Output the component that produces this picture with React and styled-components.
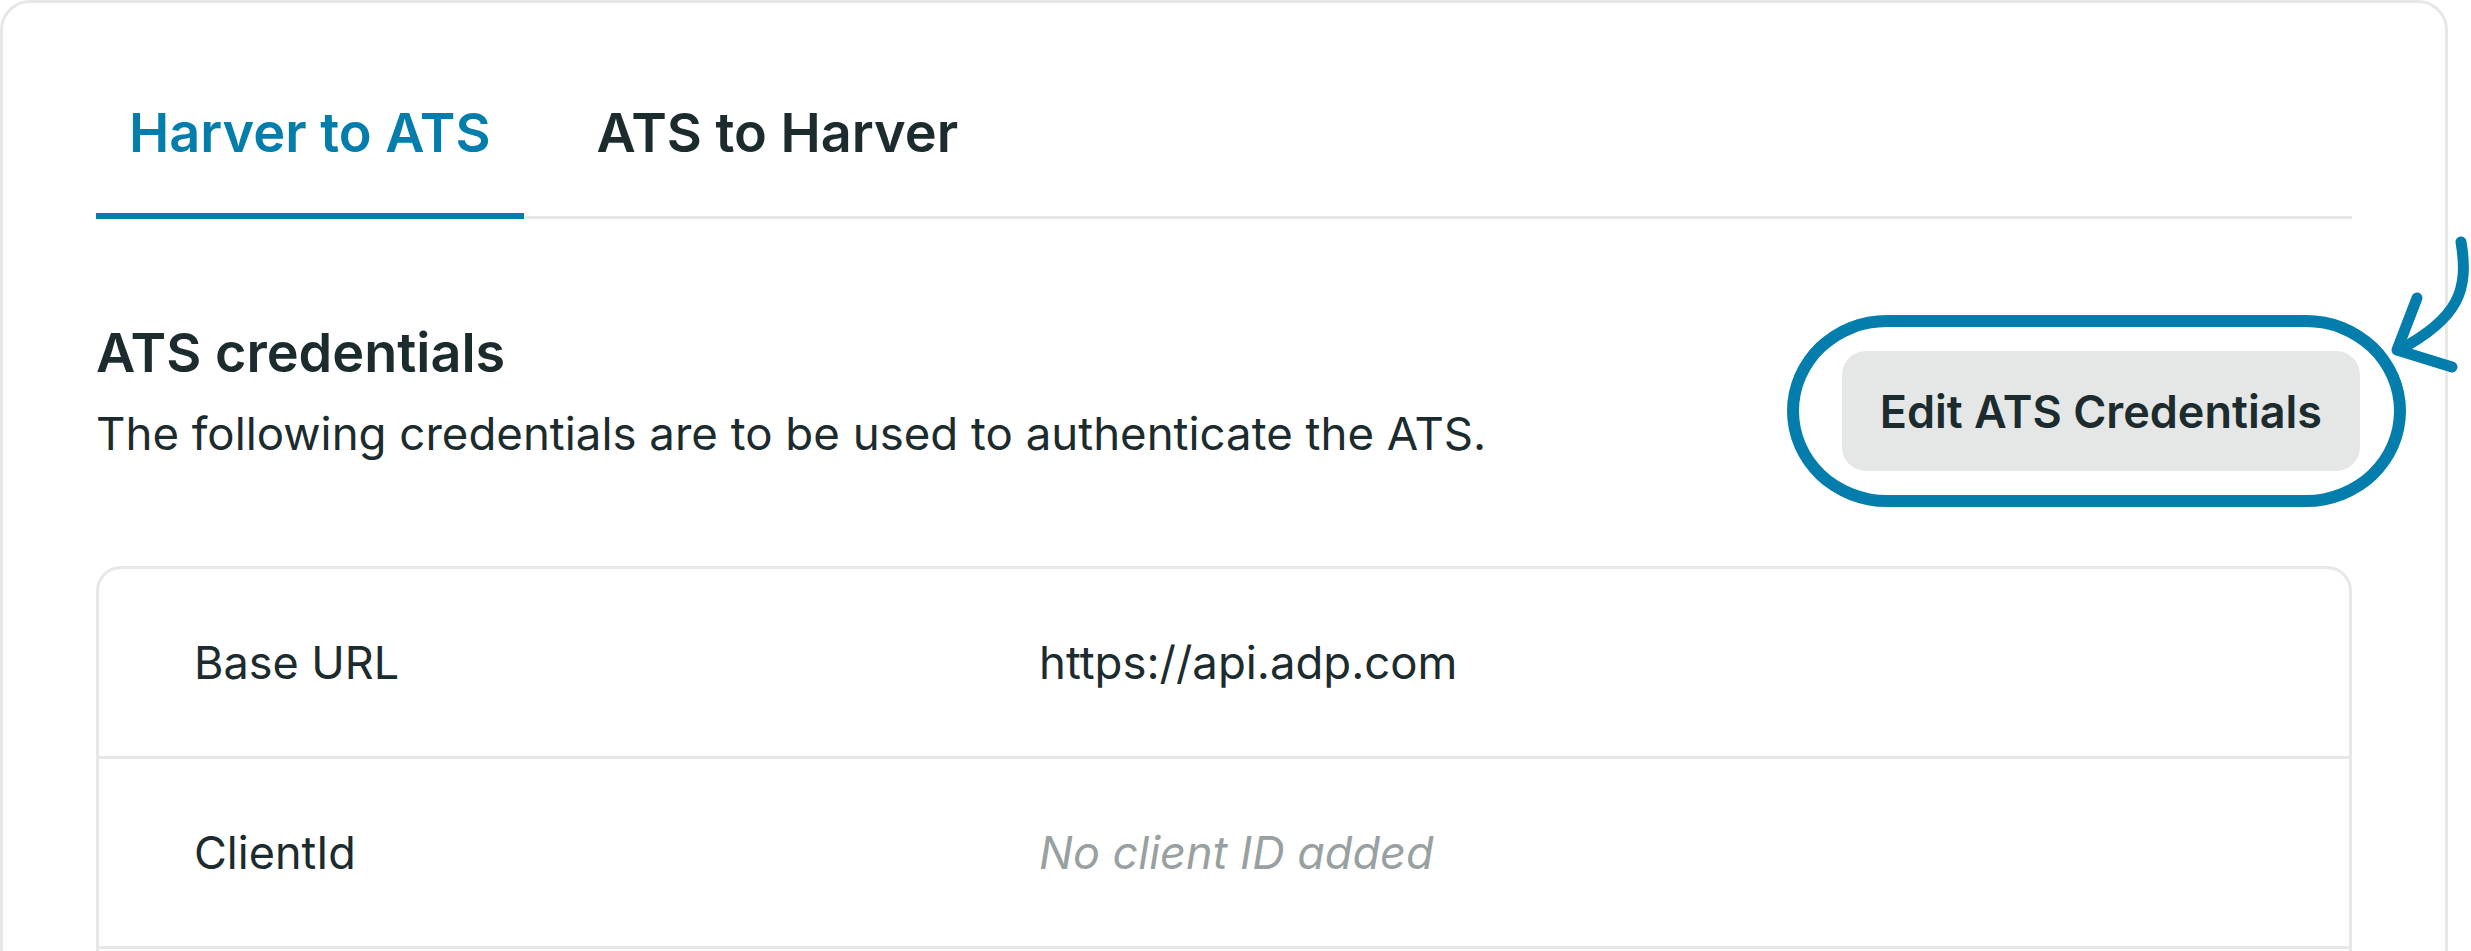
import styled, { createGlobalStyle } from "styled-components";
import { useState } from "react";

const GlobalStyle = createGlobalStyle`
  * { box-sizing: border-box; }
  body {
    margin: 0;
    background: #ffffff;
    font-family: Inter, "Noto Sans", "Liberation Sans", sans-serif;
    color: #1b2b2e;
  }
`;

const BLUE = "#037eac";
const LINE = "#e6e7e7";

const credentials = [
  { label: "Base URL", value: "https://api.adp.com" },
  { label: "ClientId", value: null, placeholder: "No client ID added" },
];

const App = () => {
  const [tab, setTab] = useState("harver-to-ats");

  return (
    <>
      <GlobalStyle />
      <Card>
        <Tabs>
          <Tab $active={tab === "harver-to-ats"} onClick={() => setTab("harver-to-ats")}>
            Harver to ATS
          </Tab>
          <Tab $active={tab === "ats-to-harver"} onClick={() => setTab("ats-to-harver")}>
            ATS to Harver
          </Tab>
        </Tabs>

        <SectionHeader>
          <HeaderText>
            <Title>ATS credentials</Title>
            <Subtitle>The following credentials are to be used to authenticate the ATS.</Subtitle>
          </HeaderText>
          <ButtonWrap>
            <EditButton>Edit ATS Credentials</EditButton>
            <Highlight />
            <Arrow width="90" height="150" viewBox="0 0 90 150">
              <path d="M79 11 C87 59, 77 87, 17 119" />
              <path d="M35 67 L15 119 L70 136" />
            </Arrow>
          </ButtonWrap>
        </SectionHeader>

        <CredentialTable>
          {credentials.map((row) => (
            <CredentialRow key={row.label}>
              <Label>{row.label}</Label>
              {row.value ? <Value>{row.value}</Value> : <Empty>{row.placeholder}</Empty>}
            </CredentialRow>
          ))}
          <CredentialRow />
        </CredentialTable>
      </Card>
    </>
  );
};

const Card = styled.div`
  width: 2448px;
  min-height: 1100px;
  border: 3px solid ${LINE};
  border-radius: 30px;
  padding: 89px 93px 0 93px;
  background: #fff;
`;

const Tabs = styled.div`
  display: flex;
  gap: 40px;
  border-bottom: 3px solid ${LINE};
`;

const Tab = styled.button`
  background: none;
  border: none;
  border-bottom: 6px solid ${({ $active }) => ($active ? BLUE : "transparent")};
  margin-bottom: -3px;
  padding: 0 33px 40px;
  font-family: inherit;
  font-size: 54px;
  line-height: 81px;
  font-weight: 600;
  color: ${({ $active }) => ($active ? BLUE : "#1b2b2e")};
  cursor: pointer;
`;

const SectionHeader = styled.div`
  display: flex;
  justify-content: space-between;
  align-items: flex-start;
  margin-top: 93px;
`;

const HeaderText = styled.div`
  display: flex;
  flex-direction: column;
  gap: 7px;
`;

const Title = styled.h2`
  margin: 0;
  font-size: 54px;
  line-height: 81px;
  font-weight: 600;
`;

const Subtitle = styled.p`
  margin: 0;
  font-size: 45.6px;
  line-height: 67px;
  font-weight: 400;
`;

const ButtonWrap = styled.div`
  position: relative;
  margin-top: 39px;
  margin-right: -8px;
`;

const EditButton = styled.button`
  height: 120px;
  padding: 0 38px;
  border: none;
  border-radius: 24px;
  background: #e5e7e6;
  font-family: inherit;
  font-size: 45px;
  font-weight: 600;
  color: #1b2b2e;
  cursor: pointer;
`;

const Highlight = styled.span`
  position: absolute;
  left: -55px;
  right: -46px;
  top: -36px;
  bottom: -36px;
  border: 12px solid ${BLUE};
  border-radius: 100px / 96px;
  pointer-events: none;
`;

const Arrow = styled.svg`
  position: absolute;
  left: 540px;
  top: -120px;
  overflow: visible;
  pointer-events: none;

  path {
    fill: none;
    stroke: ${BLUE};
    stroke-width: 11;
    stroke-linecap: round;
    stroke-linejoin: round;
  }
`;

const CredentialTable = styled.div`
  margin-top: 95px;
  border: 3px solid ${LINE};
  border-radius: 25px;
  overflow: hidden;
`;

const CredentialRow = styled.div`
  display: grid;
  grid-template-columns: 845px 1fr;
  align-items: center;
  height: 190px;
  padding-left: 95px;
  border-bottom: 3px solid ${LINE};
`;

const Label = styled.span`
  font-size: 45px;
`;

const Value = styled.span`
  font-size: 45.5px;
`;

const Empty = styled.span`
  font-size: 45px;
  font-style: italic;
  color: #99a0a1;
`;

export default App;
